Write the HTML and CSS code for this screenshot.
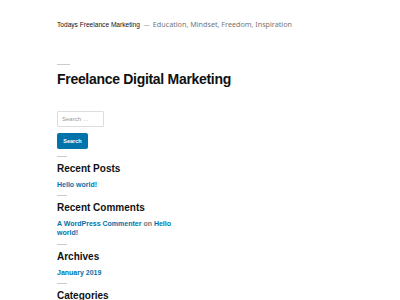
FILE: index.html
```html
<!DOCTYPE html>
<html lang="en">
<head>
    <meta charset="UTF-8">
    <meta name="viewport" content="width=device-width, initial-scale=1.0">
    <title>Todays Freelance Marketing</title>
    <link rel="stylesheet" href="styles.css">
</head>
<body>
    <header class="site-header">
        <span class="site-title">Todays Freelance Marketing</span><span class="site-dash">&mdash;</span><span class="site-description">Education, Mindset, Freedom, Inspiration</span>
    </header>

    <main class="site-main">
        <div class="sep sep-wide"></div>
        <h1 class="page-title">Freelance Digital Marketing</h1>

        <form class="search-form">
            <input type="search" class="search-field" placeholder="Search &hellip;">
            <button type="button" class="search-submit">Search</button>
        </form>

        <section class="widget">
            <div class="sep"></div>
            <h2 class="widget-title">Recent Posts</h2>
            <ul>
                <li><a href="#">Hello world!</a></li>
            </ul>
        </section>

        <section class="widget">
            <div class="sep"></div>
            <h2 class="widget-title">Recent Comments</h2>
            <ul>
                <li><a href="#">A WordPress Commenter</a> <span class="muted">on</span> <a href="#">Hello world!</a></li>
            </ul>
        </section>

        <section class="widget">
            <div class="sep"></div>
            <h2 class="widget-title">Archives</h2>
            <ul>
                <li><a href="#">January 2019</a></li>
            </ul>
        </section>

        <section class="widget">
            <div class="sep"></div>
            <h2 class="widget-title">Categories</h2>
        </section>
    </main>
</body>
</html>
```

FILE: styles.css
```css
body {
    margin: 0;
    padding: 0 57px;
    background-color: #fff;
    font-family: "Liberation Sans", Arial, sans-serif;
    color: #111;
}
.site-header {
    padding-top: 17px;
    line-height: 10px;
    white-space: nowrap;
}
.site-title {
    font-size: 6.6px;
    color: #111;
}
.site-dash {
    font-size: 6px;
    color: #767676;
    margin: 0 3px 0 4px;
}
.site-description {
    font-family: "Noto Sans", "DejaVu Sans", sans-serif;
    font-size: 7.2px;
    color: #767676;
}
.sep {
    width: 10px;
    height: 1px;
    background-color: #ccc;
}
.sep-wide {
    width: 13px;
    margin-top: 34px;
}
.page-title {
    margin: 5px 0 0;
    font-size: 14px;
    line-height: 18px;
    letter-spacing: -0.3px;
    font-weight: bold;
}
.search-form {
    margin-top: 23px;
    display: flex;
    flex-direction: column;
    align-items: flex-start;
    gap: 6px;
}
.search-field {
    box-sizing: border-box;
    width: 47px;
    height: 16px;
    margin: 0;
    padding: 0 4px;
    border: 1px solid #ddd;
    border-radius: 1px;
    font-family: "Liberation Sans", Arial, sans-serif;
    font-size: 6px;
    color: #111;
}
.search-field::placeholder {
    color: #999;
}
.search-submit {
    box-sizing: border-box;
    width: 31px;
    height: 16px;
    padding: 0;
    border: none;
    border-radius: 2px;
    background-color: #0073aa;
    color: #fff;
    font-family: "Liberation Sans", Arial, sans-serif;
    font-size: 5.5px;
    font-weight: bold;
}
.widget {
    margin-top: 6.5px;
}
.widget-title {
    margin: 5px 0 0;
    font-size: 10px;
    line-height: 14px;
    font-weight: bold;
}
.widget ul {
    list-style: none;
    margin: 4px 0 0;
    padding: 0;
    width: 116px;
    font-size: 7px;
    line-height: 9px;
    font-weight: bold;
}
.widget a {
    color: #0073aa;
    text-decoration: none;
}
.muted {
    color: #767676;
}
```
